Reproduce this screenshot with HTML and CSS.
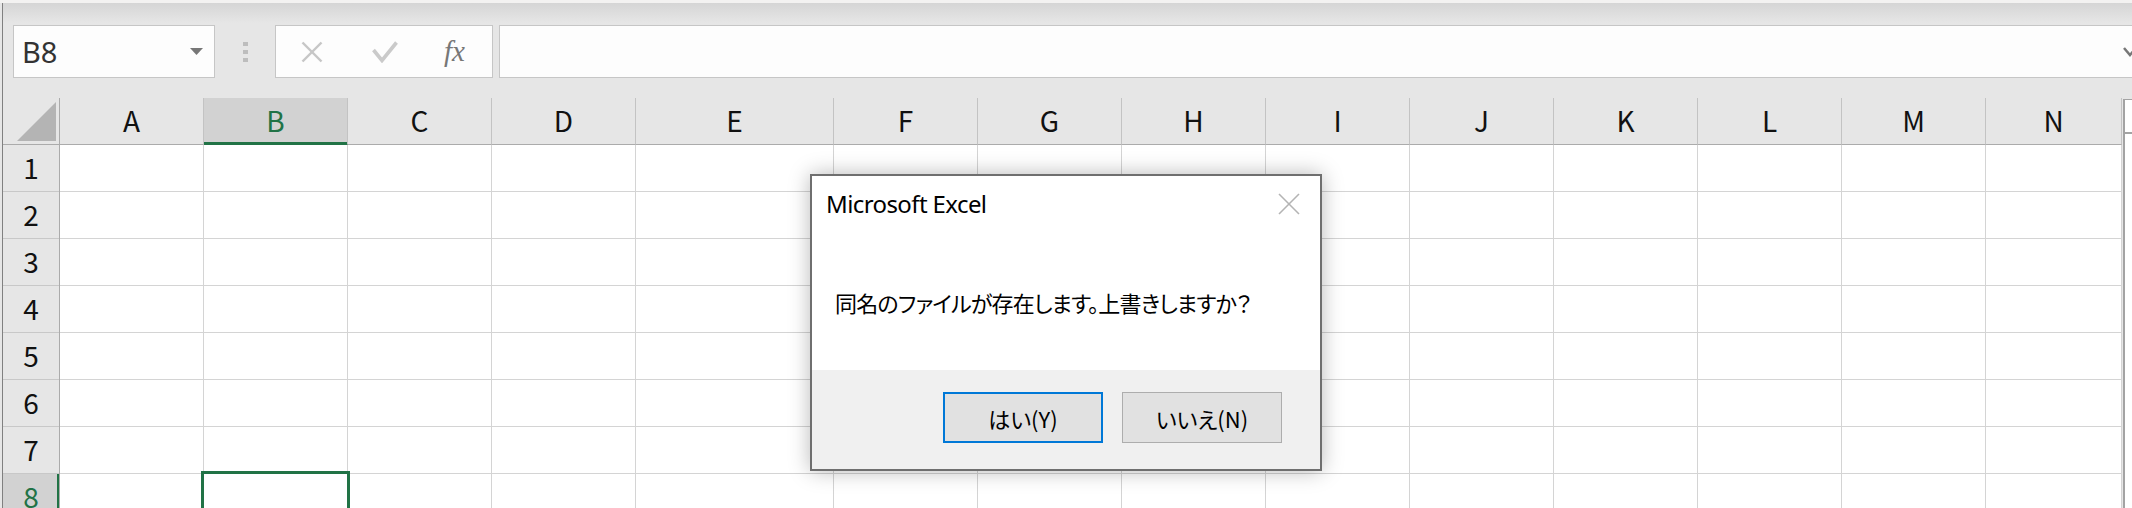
FILE: index.html
```html
<!DOCTYPE html>
<html>
<head>
    <title>Book1 - Excel</title>
    <link rel="stylesheet" href="styles.css">
</head>
<body>
    <div class="window">
        <div class="title-edge"></div>
        <div class="app">
            <div class="formula-bar">
                <div class="name-box">
                    <span>B8</span>
                    <svg class="name-drop" width="13" height="7" viewBox="0 0 13 7"><polygon points="0,0 13,0 6.5,7" /></svg>
                </div>
                <div class="grip"><i></i><i></i><i></i></div>
                <div class="fx-buttons">
                    <svg class="fx-cancel" width="22" height="22" viewBox="0 0 22 22">
                        <line x1="1.5" y1="1.5" x2="20.5" y2="20.5" />
                        <line x1="20.5" y1="1.5" x2="1.5" y2="20.5" />
                    </svg>
                    <svg class="fx-enter" width="26" height="22" viewBox="0 0 26 22">
                        <polyline points="1.5,9 10,19.5 24.5,1.5" />
                    </svg>
                    <span class="fx">fx</span>
                </div>
                <div class="formula-input">
                    <svg class="expand" width="14" height="10" viewBox="0 0 14 10"><polyline points="1,1 7,8 13,1" /></svg>
                </div>
            </div>

            <div class="sheet">
                <div class="corner">
                    <svg width="56" height="46" viewBox="0 0 56 46"><polygon points="14,43 53,43 53,4" /></svg>
                </div>
                <div class="col-head">A</div>
                <div class="col-head active">B</div>
                <div class="col-head">C</div>
                <div class="col-head">D</div>
                <div class="col-head">E</div>
                <div class="col-head">F</div>
                <div class="col-head">G</div>
                <div class="col-head">H</div>
                <div class="col-head">I</div>
                <div class="col-head">J</div>
                <div class="col-head">K</div>
                <div class="col-head">L</div>
                <div class="col-head">M</div>
                <div class="col-head">N</div>
                <div class="vscroll"><div class="vscroll-up"></div></div>

                <div class="row-heads">
                    <div class="row-head">1</div>
                    <div class="row-head">2</div>
                    <div class="row-head">3</div>
                    <div class="row-head">4</div>
                    <div class="row-head">5</div>
                    <div class="row-head">6</div>
                    <div class="row-head">7</div>
                    <div class="row-head active">8</div>
                </div>
                <div class="col-body"></div>
                <div class="col-body"></div>
                <div class="col-body"></div>
                <div class="col-body"></div>
                <div class="col-body"></div>
                <div class="col-body"></div>
                <div class="col-body"></div>
                <div class="col-body"></div>
                <div class="col-body"></div>
                <div class="col-body"></div>
                <div class="col-body"></div>
                <div class="col-body"></div>
                <div class="col-body"></div>
                <div class="col-body"></div>

                <div class="selection"></div>
            </div>
        </div>

        <div class="dialog">
            <div class="dialog-title">
                <span>Microsoft Excel</span>
                <svg class="dialog-close" width="22" height="22" viewBox="0 0 22 22">
                    <line x1="1" y1="1" x2="21" y2="21" />
                    <line x1="21" y1="1" x2="1" y2="21" />
                </svg>
            </div>
            <div class="dialog-body">
                <p>同名のファイルが存在します。上書きしますか？</p>
            </div>
            <div class="dialog-footer">
                <button class="btn btn-default">はい(Y)</button>
                <button class="btn">いいえ(N)</button>
            </div>
        </div>
    </div>
</body>
</html>
```

FILE: styles.css
```css
body {
    margin: 0;
    width: 2132px;
    height: 508px;
    overflow: hidden;
    background: #e6e6e6;
    font-family: "Noto Sans", sans-serif;
}

.window {
    position: relative;
    height: 508px;
}

.title-edge {
    height: 3px;
    background: #f3f2f1;
}

.app {
    margin-left: 2px;
    border-left: 1px solid #808080;
    height: 505px;
}

/* name box + formula bar */
.formula-bar {
    display: flex;
    align-items: center;
    height: 95px;
    box-sizing: border-box;
    padding: 22px 0 20px 10px;
    background: linear-gradient(#d5d5d5, #e6e6e6 20px);
}

.name-box {
    display: flex;
    align-items: center;
    justify-content: space-between;
    width: 202px;
    height: 53px;
    box-sizing: border-box;
    padding: 0 11px 0 8px;
    background: #fdfdfd;
    border: 1px solid #c6c6c6;
    font-size: 29px;
    color: #333;
}

.name-drop {
    fill: #777;
}

.grip {
    display: flex;
    flex-direction: column;
    gap: 4px;
    margin-left: 28px;
}

.grip i {
    display: block;
    width: 5px;
    height: 4px;
    background: #bdbdbd;
}

.fx-buttons {
    display: flex;
    align-items: center;
    width: 218px;
    height: 53px;
    box-sizing: border-box;
    margin-left: 27px;
    padding-left: 25px;
    background: #fdfdfd;
    border: 1px solid #c6c6c6;
}

.fx-cancel line {
    stroke: #c6c6c6;
    stroke-width: 2.4;
}

.fx-enter {
    margin-left: 49px;
}

.fx-enter polyline {
    fill: none;
    stroke: #cacaca;
    stroke-width: 3.6;
}

.fx {
    margin-left: 46px;
    font-family: "Liberation Serif", serif;
    font-style: italic;
    font-size: 29px;
    color: #777;
    line-height: 1;
}

.formula-input {
    display: flex;
    align-items: center;
    justify-content: flex-end;
    flex: 1;
    height: 53px;
    box-sizing: border-box;
    margin-left: 6px;
    margin-right: -30px;
    padding-right: 24px;
    background: #fdfdfd;
    border: 1px solid #c6c6c6;
}

.expand polyline {
    fill: none;
    stroke: #777;
    stroke-width: 2.5;
}

/* worksheet grid */
.sheet {
    position: relative;
    display: grid;
    grid-template-columns: 57px repeat(4, 144px) 198px repeat(8, 144px) 136px 1fr;
    grid-template-rows: 47px 1fr;
    height: 410px;
    overflow: hidden;
    font-family: "Noto Sans CJK JP", sans-serif;
    font-size: 28px;
    color: #111;
}

.corner {
    border-right: 1px solid #ababab;
    border-bottom: 1px solid #ababab;
}

.corner svg {
    display: block;
    fill: #b4b4b4;
}

.col-head {
    display: flex;
    align-items: center;
    justify-content: center;
    padding-bottom: 3px;
    border-right: 1px solid #c3c3c3;
    border-bottom: 1px solid #ababab;
}

.col-head.active {
    background: #d2d2d2;
    color: #217346;
    border-bottom-color: #217346;
    box-shadow: inset 0 -2px #217346;
}

.row-heads {
    overflow: hidden;
    border-right: 1px solid #ababab;
}

.row-head {
    display: flex;
    align-items: center;
    justify-content: center;
    height: 47px;
    box-sizing: border-box;
    padding-bottom: 3px;
    border-bottom: 1px solid #c8c8c8;
}

.row-head.active {
    background: #d2d2d2;
    color: #217346;
    box-shadow: inset -2px 0 #217346;
}

.col-body {
    border-right: 1px solid #d4d4d4;
    background: repeating-linear-gradient(#fff 0 46px, #d4d4d4 46px 47px);
}

.vscroll {
    grid-column: 16;
    grid-row: 1 / span 2;
    margin: 1px 0 0 1px;
    background: #fff;
    border-left: 2px solid #a3a3a3;
    border-top: 1px solid #a3a3a3;
}

.vscroll-up {
    height: 32px;
    border-bottom: 2px solid #a3a3a3;
}

.selection {
    position: absolute;
    left: 198px;
    top: 373px;
    width: 149px;
    height: 60px;
    box-sizing: border-box;
    border: 3px solid #217346;
}

/* message box */
.dialog {
    position: absolute;
    left: 810px;
    top: 174px;
    display: flex;
    flex-direction: column;
    width: 512px;
    height: 297px;
    box-sizing: border-box;
    background: #fff;
    border: 2px solid #6f6f6f;
    box-shadow: 0 0 20px rgba(0, 0, 0, 0.28);
}

.dialog-title {
    display: flex;
    justify-content: space-between;
    align-items: flex-start;
    height: 42px;
    box-sizing: border-box;
    padding: 12px 20px 0 14px;
    font-size: 24px;
    letter-spacing: -0.6px;
    line-height: 32px;
    color: #000;
}

.dialog-close {
    margin-top: 5px;
}

.dialog-close line {
    stroke: #b4b4b4;
    stroke-width: 1.6;
}

.dialog-body {
    display: flex;
    align-items: center;
    flex: 1;
    padding: 16px 0 0 23px;
}

.dialog-body p {
    margin: 0;
    font-family: "Noto Sans CJK JP", sans-serif;
    font-feature-settings: "palt";
    font-size: 22px;
    letter-spacing: -0.8px;
    color: #000;
}

.dialog-footer {
    display: flex;
    justify-content: flex-end;
    align-items: flex-start;
    gap: 19px;
    height: 99px;
    box-sizing: border-box;
    padding: 22px 38px 0 0;
    background: #f0f0f0;
}

.btn {
    width: 160px;
    height: 51px;
    padding: 0;
    background: #e1e1e1;
    border: 1px solid #adadad;
    font-family: "Noto Sans CJK JP", sans-serif;
    font-feature-settings: "palt";
    font-size: 22px;
    color: #000;
}

.btn-default {
    border: 2px solid #0078d7;
}
```
